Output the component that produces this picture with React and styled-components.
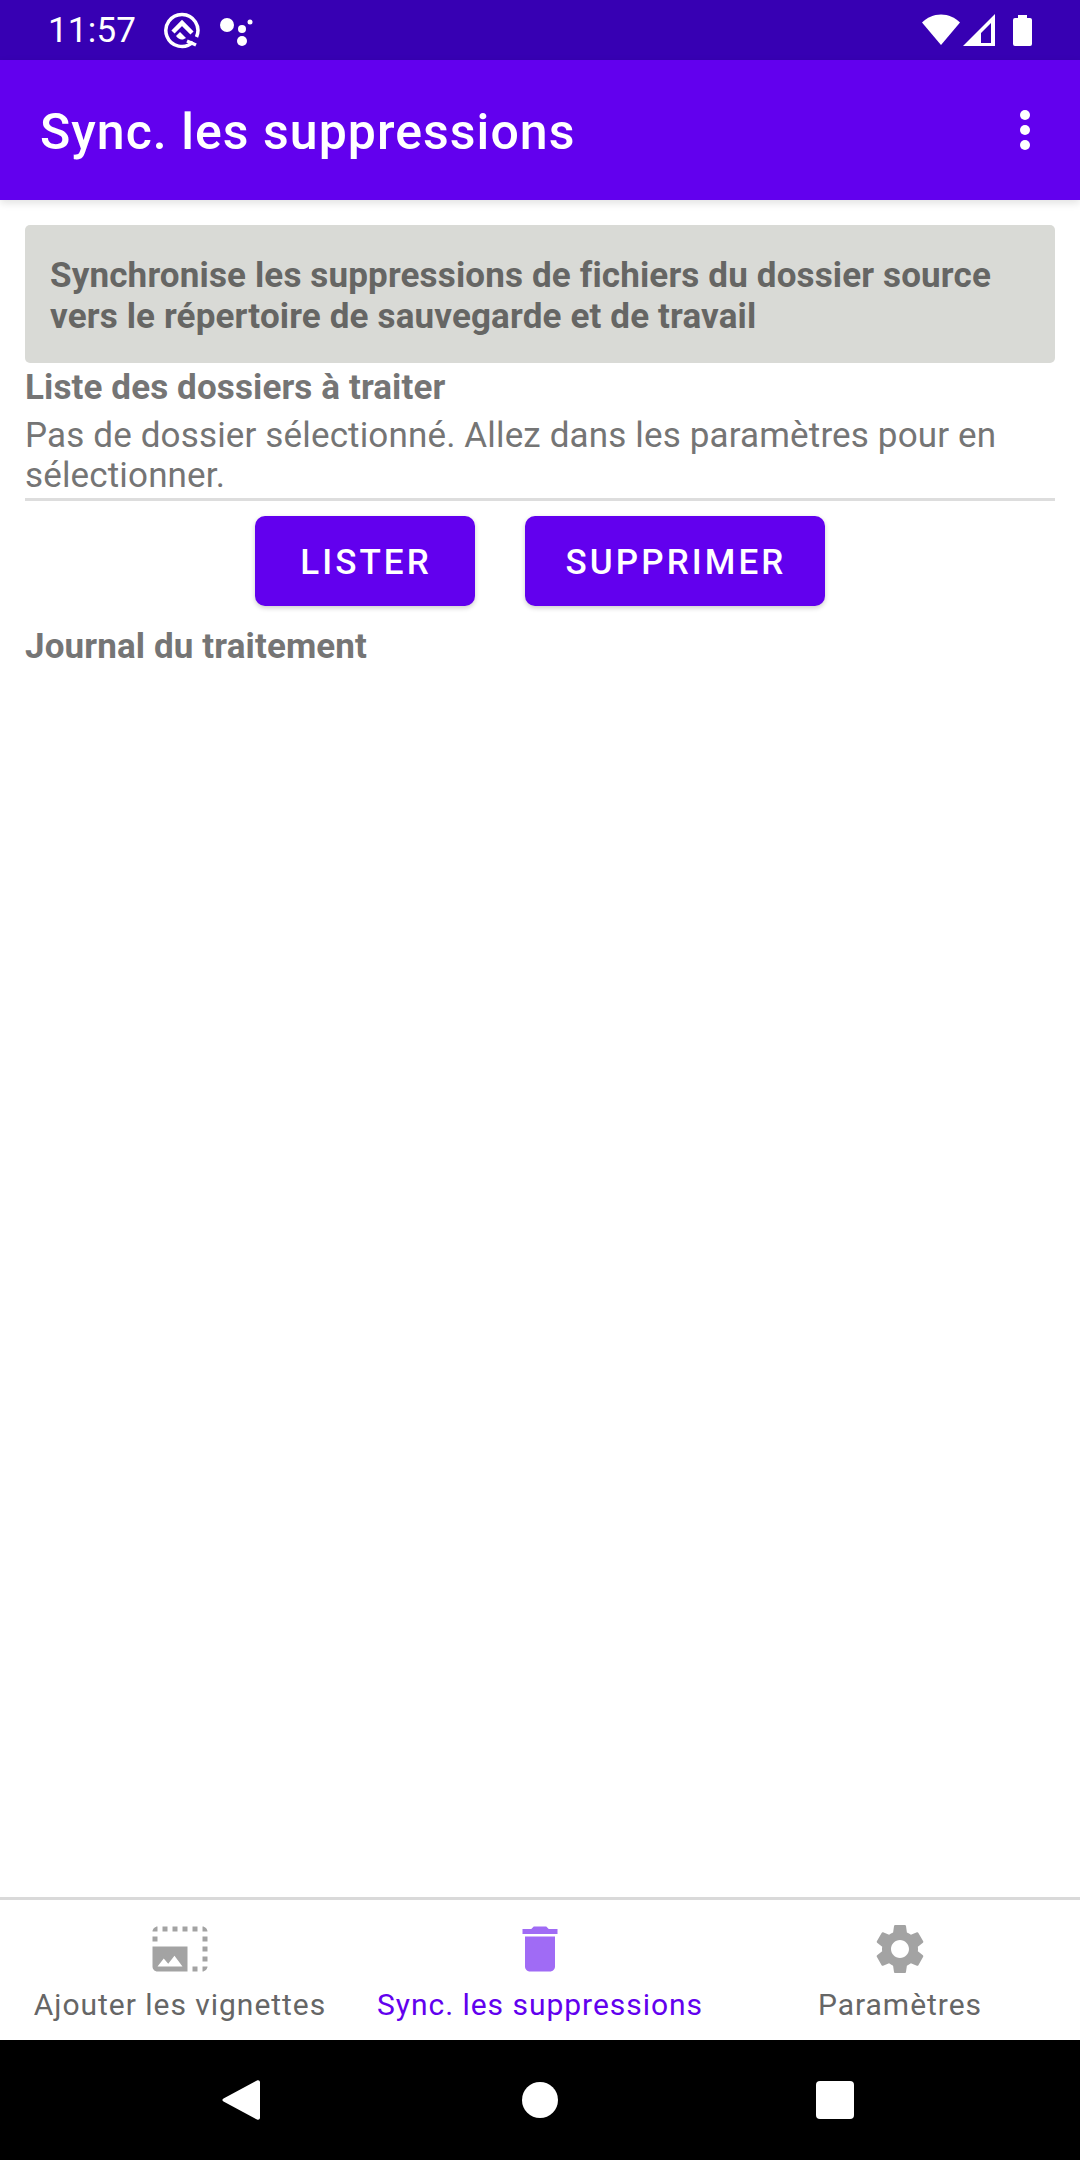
import React from 'react';
import styled, { createGlobalStyle } from 'styled-components';
import { MdPhotoSizeSelectLarge, MdDelete, MdSettings } from 'react-icons/md';

const GlobalStyle = createGlobalStyle`
  html, body {
    margin: 0;
    padding: 0;
    background: #fff;
  }
  * {
    box-sizing: border-box;
  }
`;

const tabs = [
  { label: 'Ajouter les vignettes', Icon: MdPhotoSizeSelectLarge },
  { label: 'Sync. les suppressions', Icon: MdDelete, active: true },
  { label: 'Paramètres', Icon: MdSettings },
];

const App = () => {
  return (
    <Screen>
      <GlobalStyle />
      <StatusBar>
        <Clock>11:57</Clock>
        <StatusLeftIcons>
          <svg width="38" height="38" viewBox="0 0 38 38" fill="none">
            <path d="M30 31A16 16 0 1 1 33.500 26" stroke="#fff" strokeWidth="3.500" />
            <path d="M24 30l9 4" stroke="#fff" strokeWidth="3.500" />
            <path d="M10 21l9-9 10 10" stroke="#fff" strokeWidth="4.500" />
            <path d="M13 25l4-4 6 6-3 1.500c-3 .5-5-1-7-3.500z" fill="#fff" />
          </svg>
          <svg width="38" height="38" viewBox="0 0 38 38" fill="#fff">
            <circle cx="8" cy="14" r="7" />
            <circle cx="23" cy="18" r="4" />
            <circle cx="23" cy="30" r="5" />
            <circle cx="31" cy="11" r="2.500" />
          </svg>
        </StatusLeftIcons>
        <StatusRightIcons>
          <svg width="38" height="32" viewBox="0 0 38 32" fill="#fff">
            <path d="M19 31L0 8.500C5 3.500 11.500 0.500 19 0.500S33 3.500 38 8.500z" />
          </svg>
          <svg width="32" height="32" viewBox="0 0 32 32" fill="#fff" fillRule="evenodd">
            <path d="M32 0v32H0zM28 9L18 19v10h10z" />
          </svg>
          <svg width="19" height="31" viewBox="0 0 19 31" fill="#fff">
            <path d="M5 3V0h9v3h3a2 2 0 0 1 2 2v24a2 2 0 0 1-2 2H2a2 2 0 0 1-2-2V5a2 2 0 0 1 2-2z" />
          </svg>
        </StatusRightIcons>
      </StatusBar>

      <AppBar>
        <Title>Sync. les suppressions</Title>
        <Overflow>
          <Dot />
          <Dot />
          <Dot />
        </Overflow>
      </AppBar>

      <Main>
        <InfoBox>
          Synchronise les suppressions de fichiers du dossier source vers le répertoire de sauvegarde et de travail
        </InfoBox>
        <SectionTitle>Liste des dossiers à traiter</SectionTitle>
        <FolderText>Pas de dossier sélectionné. Allez dans les paramètres pour en sélectionner.</FolderText>
        <Divider />
        <Buttons>
          <ActionButton $width={220}>LISTER</ActionButton>
          <ActionButton $width={300}>SUPPRIMER</ActionButton>
        </Buttons>
        <JournalTitle>Journal du traitement</JournalTitle>
      </Main>

      <BottomNav>
        {tabs.map(({ label, Icon, active }) => (
          <Tab key={label} $active={active}>
            <Icon size={60} />
            <TabLabel $active={active}>{label}</TabLabel>
          </Tab>
        ))}
      </BottomNav>

      <SystemNav>
        <svg width="38" height="42" viewBox="0 0 38 42" fill="#fff">
          <path d="M35 1.500c1.500-.8 3 0 3 1.700v35.600c0 1.700-1.500 2.500-3 1.700L1.500 22.500c-1.500-.8-1.500-2.200 0-3z" />
        </svg>
        <HomeButton />
        <RecentButton />
      </SystemNav>
    </Screen>
  );
};

export default App;

const Screen = styled.div`
  width: 1080px;
  height: 2160px;
  display: flex;
  flex-direction: column;
  background: #fff;
  font-family: Roboto, "Liberation Sans", sans-serif;
  overflow: hidden;
`;

const StatusBar = styled.div`
  height: 60px;
  flex: none;
  display: flex;
  align-items: center;
  padding: 0 48px 0 48px;
  background: #3700b3;
  color: #fff;
`;

const Clock = styled.span`
  padding-top: 2px;
  font-size: 35px;
  line-height: 60px;
  letter-spacing: 0.2px;
`;

const StatusLeftIcons = styled.div`
  display: flex;
  align-items: center;
  gap: 18px;
  margin-left: 27px;

  svg {
    display: block;
  }
`;

const StatusRightIcons = styled.div`
  display: flex;
  align-items: center;
  gap: 3px;
  margin-left: auto;

  svg {
    display: block;
  }
  svg:last-child {
    margin-left: 15px;
  }
`;

const AppBar = styled.header`
  position: relative;
  z-index: 1;
  height: 140px;
  flex: none;
  display: flex;
  align-items: center;
  justify-content: space-between;
  padding: 0 50px 0 40px;
  background: #6200ee;
  box-shadow: 0 3px 8px rgba(0, 0, 0, 0.12);
`;

const Title = styled.h1`
  margin: 0;
  padding-top: 3px;
  color: #fff;
  font-size: 50px;
  font-weight: 500;
  letter-spacing: 1.040px;
`;

const Overflow = styled.div`
  display: flex;
  flex-direction: column;
  gap: 5px;
`;

const Dot = styled.span`
  width: 10px;
  height: 10px;
  border-radius: 50%;
  background: #fff;
`;

const Main = styled.main`
  flex: 1;
  padding: 25px 25px 0;
`;

const InfoBox = styled.div`
  height: 138px;
  padding: 30px 25px 0;
  border-radius: 5px;
  background: #d9dad6;
  color: #666664;
  font-size: 35px;
  font-weight: 700;
  line-height: 41px;
  letter-spacing: 0.150px;
`;

const SectionTitle = styled.div`
  margin-top: 4px;
  color: #757575;
  font-size: 35px;
  font-weight: 700;
  line-height: 41px;
  letter-spacing: 0.120px;
`;

const FolderText = styled.div`
  margin-top: 8px;
  color: #757575;
  font-size: 35px;
  line-height: 40px;
  letter-spacing: 0.150px;
`;

const Divider = styled.div`
  height: 3px;
  margin-top: 2px;
  background: #dddddd;
`;

const Buttons = styled.div`
  display: flex;
  justify-content: center;
  gap: 50px;
  margin-top: 15px;
`;

const ActionButton = styled.button`
  width: ${(p) => p.$width}px;
  height: 90px;
  padding: 3px 0 0 2px;
  border: 0;
  border-radius: 10px;
  background: #6200ee;
  color: #fff;
  font-family: inherit;
  font-size: 35px;
  font-weight: 500;
  letter-spacing: 3.100px;
  box-shadow: 0 2px 5px rgba(0, 0, 0, 0.2);
`;

const JournalTitle = styled(SectionTitle)`
  margin-top: 20px;
`;

const BottomNav = styled.nav`
  height: 143px;
  flex: none;
  display: grid;
  grid-template-columns: repeat(3, 1fr);
  border-top: 3px solid #d9d9d9;
  background: #fff;
`;

const Tab = styled.div`
  display: flex;
  flex-direction: column;
  align-items: center;
  padding-top: 19px;
  color: ${(p) => (p.$active ? '#a06bf5' : '#a3a3a3')};
`;

const TabLabel = styled.span`
  margin-top: 8px;
  color: ${(p) => (p.$active ? '#6200ee' : '#666666')};
  font-size: 30px;
  line-height: 36px;
  letter-spacing: 0.970px;
  white-space: nowrap;
`;

const SystemNav = styled.div`
  height: 120px;
  flex: none;
  display: flex;
  align-items: center;
  padding-left: 222px;
  background: #000;
`;

const HomeButton = styled.span`
  width: 36px;
  height: 36px;
  margin-left: 262px;
  border-radius: 50%;
  background: #fff;
`;

const RecentButton = styled.span`
  width: 38px;
  height: 38px;
  margin-left: 258px;
  border-radius: 4px;
  background: #fff;
`;
